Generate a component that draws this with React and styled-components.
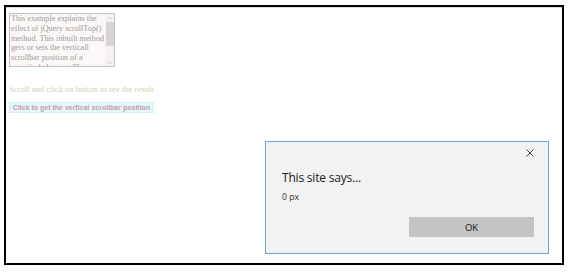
import React from 'react';
import styled, { createGlobalStyle } from 'styled-components';

const GlobalStyle = createGlobalStyle`
  html, body {
    margin: 0;
    padding: 0;
    background: #ffffff;
  }
`;

const Frame = styled.div`
  position: relative;
  box-sizing: border-box;
  margin: 5px 0 0 4px;
  width: 560px;
  height: 260px;
  border: 2px solid #000;
  background: #fff;
`;

const TopEdge = styled.div`
  height: 1px;
  background: #dcdcdc;
`;

const Content = styled.div`
  display: flex;
  flex-direction: column;
  align-items: flex-start;
  padding: 5px 0 0 3px;
`;

const TextBox = styled.div`
  display: flex;
  box-sizing: border-box;
  width: 106px;
  height: 54px;
  border: 1px solid #c4c0c0;
  background: #fdf7f7;
`;

const TextLines = styled.div`
  flex: 1;
  overflow: hidden;
  padding: 0 0 0 1px;
  font-family: "Liberation Serif", serif;
  font-size: 8.2px;
  line-height: 9.8px;
  color: #a39a9a;
  white-space: nowrap;
`;

const Scrollbar = styled.div`
  display: flex;
  flex-direction: column;
  align-items: center;
  width: 9px;
  background: #f4f2f2;
`;

const Arrow = styled.div`
  display: flex;
  align-items: center;
  justify-content: center;
  height: 7px;
  width: 100%;
  color: #c8c8c8;
`;

const Thumb = styled.div`
  width: 8px;
  height: 24px;
  margin-top: 1px;
  background: #d6d4d4;
`;

const Track = styled.div`
  flex: 1;
`;

const Note = styled.p`
  margin: 17px 0 0 0;
  font-family: "Liberation Serif", serif;
  font-size: 8.6px;
  line-height: 10px;
  color: #c9d3b5;
`;

const ActionButton = styled.button`
  margin-top: 8px;
  box-sizing: border-box;
  height: 11px;
  width: 145px;
  padding: 0;
  border: 1px solid #d2f1f6;
  background: #e2f8fb;
  font-family: "Liberation Sans", Arial, sans-serif;
  font-weight: bold;
  font-size: 7px;
  line-height: 9px;
  color: #c99aa5;
`;

const Dialog = styled.div`
  position: absolute;
  left: 259px;
  top: 134px;
  box-sizing: border-box;
  width: 284px;
  height: 113px;
  border: 1px solid #6fa3d3;
  background: #f2f2f2;
  display: flex;
  flex-direction: column;
  padding: 4px 14px 0 16px;
  font-family: "Open Sans", "Noto Sans", sans-serif;
  color: #1a1a1a;
`;

const CloseRow = styled.div`
  display: flex;
  justify-content: flex-end;
  height: 14px;
  align-items: center;
`;

const Title = styled.div`
  margin-top: 9px;
  font-size: 12px;
  line-height: 17px;
  letter-spacing: -0.2px;
`;

const Message = styled.div`
  margin-top: 5px;
  font-size: 8.6px;
  line-height: 12px;
  color: #333;
`;

const Footer = styled.div`
  display: flex;
  justify-content: flex-end;
  margin-top: 14px;
`;

const OkButton = styled.button`
  width: 125px;
  height: 20px;
  border: none;
  padding: 0;
  background: #c4c4c4;
  font-family: "Open Sans", "Noto Sans", sans-serif;
  font-size: 9.5px;
  color: #111;
`;

const lines = [
  'This example explains the',
  'effect of jQuery scrollTop()',
  'method. This inbuilt method',
  'gers or sets the verticall',
  'scrollbar position of a',
  'specified element. The',
];

const App = () => {
  return (
    <>
      <GlobalStyle />
      <Frame>
        <TopEdge />
        <Content>
          <TextBox>
            <TextLines>
              {lines.map((l, i) => <div key={i}>{l}</div>)}
            </TextLines>
            <Scrollbar>
              <Arrow>
                <svg width="6" height="4" viewBox="0 0 6 4"><path d="M0.5 3.5 L3 1 L5.5 3.5" fill="none" stroke="currentColor" strokeWidth="0.8" /></svg>
              </Arrow>
              <Thumb />
              <Track />
              <Arrow>
                <svg width="6" height="4" viewBox="0 0 6 4"><path d="M0.5 0.5 L3 3 L5.5 0.5" fill="none" stroke="currentColor" strokeWidth="0.8" /></svg>
              </Arrow>
            </Scrollbar>
          </TextBox>
          <Note>Scroll and click on button to see the result.</Note>
          <ActionButton>Click to get the vertical scrollbar position</ActionButton>
        </Content>
        <Dialog>
          <CloseRow>
            <svg width="8" height="8" viewBox="0 0 8 8"><path d="M0.5 0.5 L7.5 7.5 M7.5 0.5 L0.5 7.5" stroke="#333" strokeWidth="0.9" /></svg>
          </CloseRow>
          <Title>This site says...</Title>
          <Message>0 px</Message>
          <Footer>
            <OkButton>OK</OkButton>
          </Footer>
        </Dialog>
      </Frame>
    </>
  );
};

export default App;
